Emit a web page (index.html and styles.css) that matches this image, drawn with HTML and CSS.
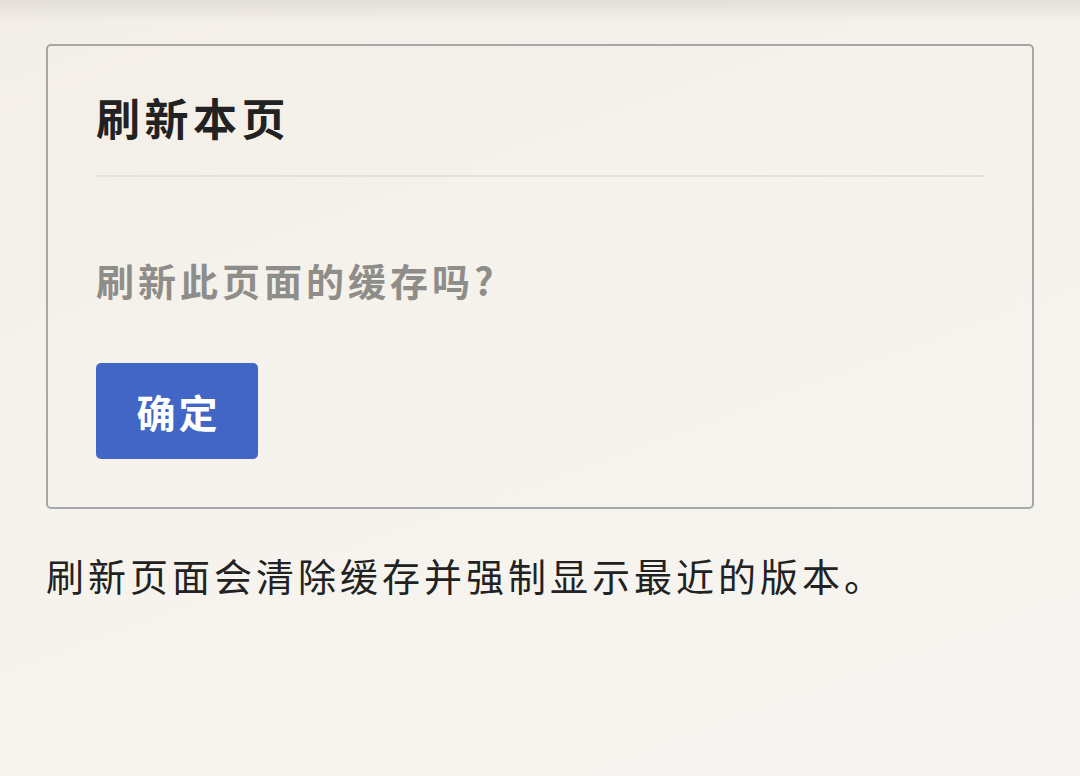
FILE: index.html
```html
<!DOCTYPE html>
<html lang="zh-CN">
<head>
<meta charset="utf-8">
<title>刷新本页</title>
<link rel="stylesheet" href="styles.css">
</head>
<body>
<div class="top-shade"></div>
<main class="page">
  <section class="card">
    <header class="card-header">
      <h1 class="card-title">刷新本页</h1>
    </header>
    <div class="card-body">
      <p class="question">刷新此页面的缓存吗?</p>
      <button class="btn-primary" type="button">确定</button>
    </div>
  </section>
  <p class="note">刷新页面会清除缓存并强制显示最近的版本。</p>
</main>
</body>
</html>
```
FILE: styles.css
```css
html, body {
  margin: 0;
  padding: 0;
}
body {
  width: 1080px;
  height: 776px;
  overflow: hidden;
  background: linear-gradient(160deg, #f3efe7 0%, #f6f3ed 50%, #f7f5f1 100%);
  font-family: "Noto Sans CJK SC", "Noto Sans", sans-serif;
  color: #222222;
  position: relative;
}
.top-shade {
  position: absolute;
  left: 0;
  top: 0;
  width: 100%;
  height: 22px;
  background: linear-gradient(to bottom, rgba(200, 196, 190, 0.4), rgba(200, 196, 190, 0));
}
.page {
  padding: 44px 46px 0 46px;
}
.card {
  border: 2px solid #a5a8a9;
  border-radius: 5px;
  padding: 41px 48px 48px 48px;
}
.card-header {
  border-bottom: 2px solid #e5e2dd;
  padding-bottom: 28px;
}
.card-title {
  margin: 0;
  font-size: 44px;
  line-height: 60px;
  font-weight: 700;
  letter-spacing: 4.5px;
  color: #222222;
}
.card-body {
  padding-top: 75px;
}
.question {
  margin: 0 0 55px 0;
  font-size: 38px;
  line-height: 56px;
  font-weight: 700;
  letter-spacing: 4px;
  color: #8f8d8a;
}
.btn-primary {
  display: block;
  width: 162px;
  height: 96px;
  border: none;
  border-radius: 5px;
  background: #4266c5;
  color: #ffffff;
  font-family: inherit;
  font-size: 39px;
  font-weight: 700;
  letter-spacing: 3px;
  padding: 0 0 0 3px;
}
.note {
  margin: 38px 0 0 0;
  font-size: 38px;
  line-height: 56px;
  letter-spacing: 4px;
  color: #222222;
}
```
